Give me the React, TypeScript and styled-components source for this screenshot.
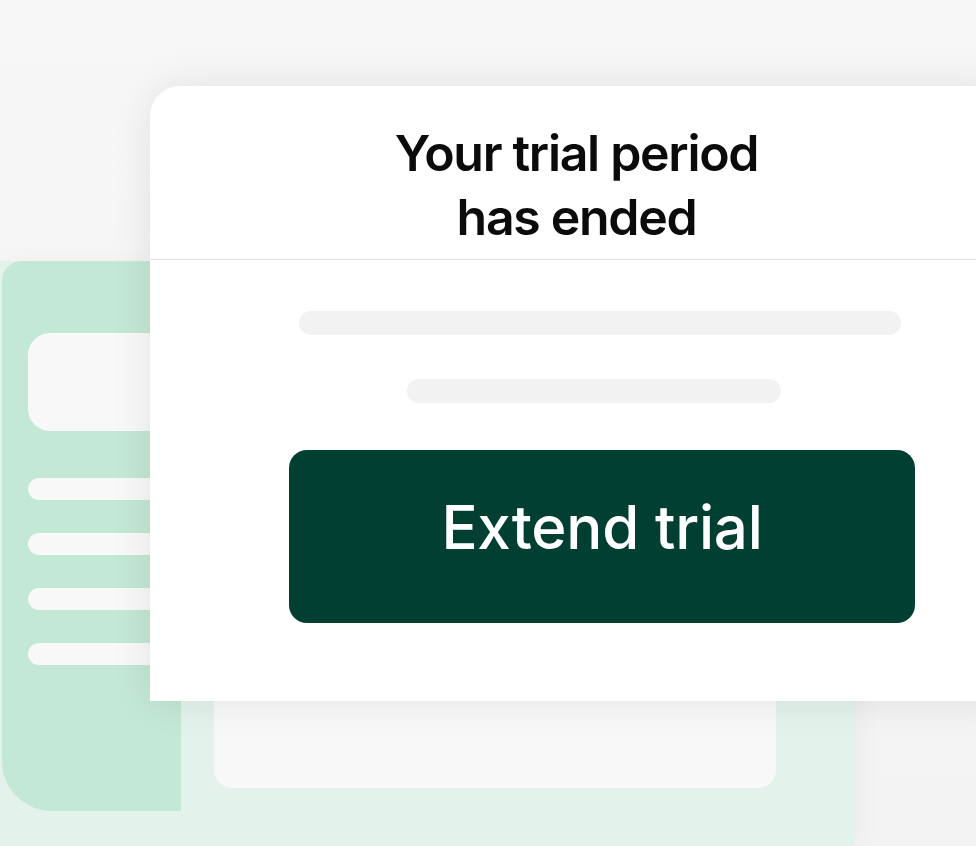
import React from "react";
import styled, { createGlobalStyle } from "styled-components";

const Global = createGlobalStyle`
  html, body { margin: 0; padding: 0; background: #f4f4f4; }
  * { box-sizing: border-box; }
`;

export default function App() {
  return (
    <>
      <Global />
      <Stage>
        {/* app behind the dialog */}
        <BackPanel>
          <Sidebar>
            <Logo />
            <NavLine />
            <NavLine />
            <NavLine />
            <NavLine />
          </Sidebar>
          <ContentCard />
        </BackPanel>

        {/* trial ended dialog */}
        <Modal>
          <Header>
            <Title>
              Your trial period
              <br />
              has ended
            </Title>
          </Header>
          <Body>
            <TextBar $left={149} $width={602} />
            <TextBar $left={257} $width={374} $top={44} />
            <ExtendButton>Extend trial</ExtendButton>
          </Body>
        </Modal>
      </Stage>
    </>
  );
}

const Stage = styled.div`
  position: relative; width: 976px; height: 846px; overflow: hidden;
  padding-top: 261px;
  background: linear-gradient(180deg, #f7f7f7 0%, #f3f3f3 100%);
`;

const BackPanel = styled.div`
  display: flex; align-items: flex-start;
  width: 855px; height: 585px; background: #e3f3ec;
  box-shadow: 6px 0 24px rgba(0,0,0,0.03);
`;
const Sidebar = styled.div`
  display: flex; flex-direction: column; gap: 33px;
  width: 179px; height: 550px; margin-left: 2px;
  padding: 72px 0 0 26px;
  background: #c3e8d5; border-radius: 20px 0 0 50px;
`;
const Logo = styled.div`
  width: 150px; height: 98px; border-radius: 22px; background: #f8f8f8;
  margin-bottom: 14px;
`;
const NavLine = styled.div`
  width: 150px; height: 22px; border-radius: 11px; background: #f8f8f8;
`;
const ContentCard = styled.div`
  width: 562px; height: 127px; margin: 400px 0 0 33px;
  border-radius: 18px; background: #f8f8f8;
`;

const Modal = styled.div`
  position: absolute; top: 86px; left: 150px;
  width: 853px; height: 615px; background: #fff;
  border-radius: 30px 0 0 0;
  box-shadow: 0 0 40px rgba(0,0,0,0.09);
  display: flex; flex-direction: column;
`;
const Header = styled.div`
  height: 174px; border-bottom: 1px solid #e4e4e4;
  display: flex; justify-content: center;
  padding-top: 35px;
`;
const Title = styled.h1`
  margin: 0; text-align: center;
  font-family: Inter, "Liberation Sans", sans-serif;
  font-weight: 600; font-size: 50px; line-height: 64px; letter-spacing: -1.3px;
  color: #0b0b0b;
`;
const Body = styled.div`
  display: flex; flex-direction: column; align-items: flex-start;
  padding-top: 51px;
`;
const TextBar = styled.div<{ $left: number; $width: number; $top?: number }>`
  margin-left: ${p => p.$left}px; margin-top: ${p => p.$top ?? 0}px;
  width: ${p => p.$width}px; height: 24px; border-radius: 12px; background: #f2f2f2;
`;
const ExtendButton = styled.button`
  margin: 47px 0 0 139px; width: 626px; height: 173px;
  border: none; border-radius: 18px; background: #013f33; color: #fff;
  font-family: Inter, "Liberation Sans", sans-serif;
  font-weight: 500; font-size: 60px; letter-spacing: -0.2px;
  padding-bottom: 20px;
`;
